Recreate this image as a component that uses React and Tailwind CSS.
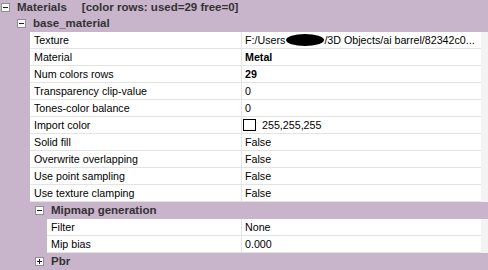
import React from 'react';

// tree expand / collapse glyph of the property grid
const ExpandIcon = ({ open = true }) => (
  <svg width="9" height="9" viewBox="0 0 9 9" className="shrink-0">
    <rect x="0.5" y="0.5" width="8" height="8" fill="#f8f8f8" stroke="#8f8f8f" />
    <path d="M2 4.5h5" stroke="#1e1e1e" />
    {!open && <path d="M4.5 2v5" stroke="#1e1e1e" />}
  </svg>
);

const GroupRow = ({ label, extra, open = true, pad, tall = true }) => (
  <div className={`flex items-center gap-[7px] bg-[#c8b4cb] ${pad} ${tall ? 'h-[17px]' : 'h-[15px]'}`}>
    <ExpandIcon open={open} />
    <span className="whitespace-nowrap text-[11.5px] font-bold text-[#333]">
      {label}
      {extra && <span className="ml-[15px]">{extra}</span>}
    </span>
  </div>
);

const PropRow = ({ name, nested, children }) => (
  <div className="flex h-[17px] text-[10.7px] text-black">
    <div className={nested ? 'w-[47px] shrink-0 bg-[#c8b4cb]' : 'w-[30px] shrink-0 bg-[#c8b4cb]'} />
    <div className="flex min-w-0 flex-1 items-center whitespace-nowrap border-b border-[#e3e3e3] bg-white pl-[4px]">
      {name}
    </div>
    <div className="flex w-[240px] shrink-0 items-center overflow-hidden whitespace-nowrap border-b border-l border-[#e3e3e3] bg-white pl-[3px]">
      {children}
    </div>
    <div className="w-[7px] shrink-0 bg-[#f3f3f3]" />
  </div>
);

const App = () => {
  return (
    <div className="h-[270px] w-[488px] overflow-hidden bg-[#c8b4cb] font-['Liberation_Sans',Arial,sans-serif]">
      <GroupRow label="Materials" extra="[color rows: used=29 free=0]" pad="pl-[1px]" tall={false} />
      <GroupRow label="base_material" pad="pl-[17px]" />

      <PropRow name="Texture">
        <span>F:/Users</span>
        <span className="ml-[1px] inline-block h-[12px] w-[38px] shrink-0 rounded-[50%] bg-black" />
        <span>/3D Objects/ai barrel/82342c0...</span>
      </PropRow>
      <PropRow name="Material">
        <span className="font-bold">Metal</span>
      </PropRow>
      <PropRow name="Num colors rows">
        <span className="font-bold">29</span>
      </PropRow>
      <PropRow name="Transparency clip-value">0</PropRow>
      <PropRow name="Tones-color balance">0</PropRow>
      <PropRow name="Import color">
        <span className="-ml-[2px] inline-block h-[12px] w-[13px] shrink-0 border border-black bg-white" />
        <span className="ml-[6px]">255,255,255</span>
      </PropRow>
      <PropRow name="Solid fill">False</PropRow>
      <PropRow name="Overwrite overlapping">False</PropRow>
      <PropRow name="Use point sampling">False</PropRow>
      <PropRow name="Use texture clamping">False</PropRow>

      <GroupRow label="Mipmap generation" pad="pl-[35px]" />
      <PropRow name="Filter" nested>None</PropRow>
      <PropRow name="Mip bias" nested>0.000</PropRow>

      <GroupRow label="Pbr" open={false} pad="pl-[35px]" />
    </div>
  );
};

export default App;
